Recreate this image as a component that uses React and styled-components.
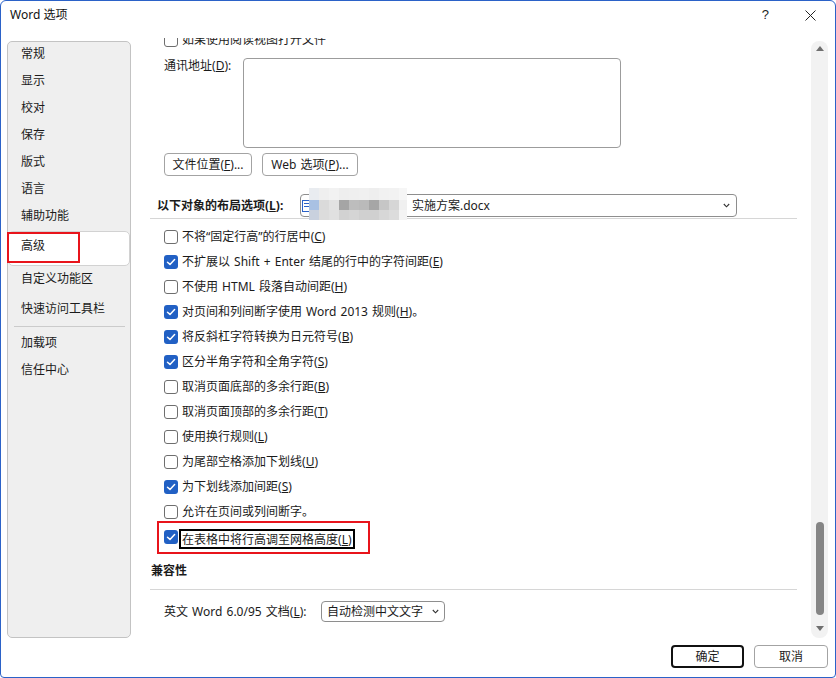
import React from 'react'
import styled, { createGlobalStyle } from 'styled-components'

const GlobalStyle = createGlobalStyle`
  html, body {
    margin: 0;
    padding: 0;
    width: 836px;
    height: 678px;
    overflow: hidden;
    background: #fff;
  }
  body {
    font-family: "Noto Sans", "Noto Sans CJK SC", "Microsoft YaHei", sans-serif;
    font-size: 12px;
    color: #1b1b1b;
  }
`

const Window = styled.div`
  box-sizing: border-box;
  width: 836px;
  height: 678px;
  border: 1px solid #2b62c8;
  border-radius: 6px 6px 4px 4px;
  background: #fff;
  display: flex;
  flex-direction: column;
  overflow: hidden;
`

const TitleBar = styled.div`
  box-sizing: border-box;
  height: 37px;
  flex-shrink: 0;
  display: flex;
  align-items: flex-start;
  padding: 6px 19px 0 9px;
  line-height: 16px;
  color: #111;
`

const TitleButtons = styled.div`
  margin-left: auto;
  display: flex;
  align-items: center;
  gap: 36px;
  height: 16px;
`

const HelpMark = styled.span`
  font-family: "Liberation Sans", sans-serif;
  font-size: 13px;
  color: #222;
`

const Body = styled.div`
  flex: 1;
  display: flex;
  min-height: 0;
`

const Nav = styled.div`
  box-sizing: border-box;
  width: 124px;
  height: 597px;
  margin: 3px 0 0 6px;
  border: 1px solid #c3c3c3;
  border-radius: 5px;
  background: #efefef;
  display: flex;
  flex-direction: column;
  flex-shrink: 0;
`

const NavItem = styled.div`
  position: relative;
  box-sizing: border-box;
  height: ${p => p.$h || 27}px;
  padding: ${p => p.$pt || 0}px 0 ${p => p.$pb ?? 4}px 12px;
  display: flex;
  align-items: center;
  line-height: 16px;
  color: #1b1b1b;
  background: ${p => (p.$selected ? '#fff' : 'transparent')};
  border: ${p => (p.$selected ? '1px solid #d2d2d2' : '1px solid transparent')};
  border-radius: 5px;
`

const NavDivider = styled.div`
  height: 1px;
  margin: 0 5px 0 6px;
  background: #cbcbcb;
`

const RedMark = styled.div`
  position: absolute;
  left: -2px;
  top: 0;
  width: 73px;
  height: 31px;
  box-sizing: border-box;
  border: 2px solid #e8141b;
`

const Content = styled.div`
  flex: 1;
  min-width: 0;
  margin-left: 9px;
  padding: 0 14px 0 10px;
  overflow: hidden;
  display: flex;
  flex-direction: column;
  word-spacing: 1px;
`

const PartialRow = styled.div`
  flex-shrink: 0;
  height: 25px;
  margin-top: -11px;
  padding-left: 14px;
  display: flex;
  align-items: center;
  gap: 4px;
  line-height: 16px;
`

const AddressRow = styled.div`
  flex-shrink: 0;
  display: flex;
  align-items: flex-start;
  margin-top: 6px;
  padding-left: 14px;
`

const FieldLabel = styled.span`
  width: ${p => p.$w}px;
  flex-shrink: 0;
  line-height: 16px;
  white-space: nowrap;
`

const TextBox = styled.div`
  box-sizing: border-box;
  width: 378px;
  height: 90px;
  border: 1px solid #9c9c9c;
  border-radius: 4px;
  background: #fff;
`

const ButtonRow = styled.div`
  flex-shrink: 0;
  display: flex;
  gap: 10px;
  margin-top: 5px;
  padding-left: 14px;
`

const Button = styled.button`
  box-sizing: border-box;
  width: ${p => p.$w}px;
  height: 23px;
  padding: 0;
  font-family: inherit;
  font-size: 12px;
  word-spacing: 1px;
  color: #1b1b1b;
  background: #fff;
  border: ${p => (p.$primary ? '2px solid #111' : '1px solid #a3a3a3')};
  border-radius: 4px;
  line-height: 16px;
  white-space: nowrap;
`

const LayoutRow = styled.div`
  flex-shrink: 0;
  display: flex;
  align-items: center;
  height: 23px;
  margin-top: 18px;
  padding-left: 7px;
`

const BoldLabel = styled.span`
  font-weight: bold;
  line-height: 16px;
  width: ${p => (p.$w ? `${p.$w}px` : 'auto')};
  flex-shrink: 0;
  white-space: nowrap;
  padding-left: ${p => p.$pl || 0}px;
  margin-top: ${p => p.$mt || 0}px;
`

const Select = styled.div`
  position: relative;
  box-sizing: border-box;
  width: ${p => p.$w}px;
  height: ${p => p.$h}px;
  border: 1px solid #8e8e8e;
  border-radius: 4px;
  background: #fff;
  display: flex;
  align-items: center;
  padding-left: ${p => p.$pl || 0}px;
  line-height: 16px;
  flex-shrink: 0;
  white-space: nowrap;
`

const Redacted = styled.span`
  width: 101px;
  flex-shrink: 0;
`

const Chevron = styled.svg`
  margin-left: auto;
  margin-right: ${p => p.$mr || 6}px;
  flex-shrink: 0;
`

const Mosaic = styled.svg`
  position: absolute;
  left: 8px;
  top: -7px;
`

const Divider = styled.div`
  flex-shrink: 0;
  height: 1px;
  margin-top: ${p => p.$mt}px;
  background: #d6d6d6;
`

const CheckList = styled.div`
  flex-shrink: 0;
  display: flex;
  flex-direction: column;
  margin-top: 5px;
`

const CheckRow = styled.div`
  position: relative;
  height: 25px;
  padding-left: 14px;
  display: flex;
  align-items: center;
  gap: 4px;
  line-height: 16px;
  white-space: nowrap;
`

const Box = styled.span`
  box-sizing: border-box;
  width: 14px;
  height: 14px;
  flex-shrink: 0;
  border-radius: 3px;
  border: ${p => (p.$checked ? 'none' : '1px solid #6e6e6e')};
  background: ${p => (p.$checked ? '#2160c4' : '#fff')};
  display: flex;
  align-items: center;
  justify-content: center;
`

const FocusLabel = styled.span`
  margin-left: -3px;
  padding: 1px 1px 0;
  border: 2px solid #000;
  line-height: 15px;
  position: relative;
  top: 2px;
`

const RowMark = styled.div`
  position: absolute;
  left: 7px;
  top: -3px;
  width: 213px;
  height: 33px;
  box-sizing: border-box;
  border: 2px solid #e8141b;
  pointer-events: none;
`

const CompatRow = styled.div`
  flex-shrink: 0;
  display: flex;
  align-items: center;
  height: 21px;
  margin-top: 11px;
  padding-left: 14px;
`

const Scrollbar = styled.div`
  width: 17px;
  height: 597px;
  margin: 3px 7px 0 0;
  border-radius: 8px;
  background: #f2f2f2;
  display: flex;
  flex-direction: column;
  align-items: center;
  flex-shrink: 0;
`

const ArrowSlot = styled.div`
  box-sizing: border-box;
  height: ${p => p.$h}px;
  padding-top: ${p => p.$pt}px;
  display: flex;
  justify-content: center;
`

const Thumb = styled.div`
  width: 8px;
  height: 93px;
  border-radius: 4px;
  background: #858585;
  margin-top: auto;
`

const Footer = styled.div`
  box-sizing: border-box;
  height: 38px;
  flex-shrink: 0;
  display: flex;
  justify-content: flex-end;
  gap: 10px;
  padding: 6px 7px 0 0;
`

const U = styled.span`
  text-decoration: underline;
  text-underline-offset: 1px;
`

const Key = ({ k }) => (
  <>
    (<U>{k}</U>)
  </>
)

const Check = ({ checked }) => (
  <Box $checked={checked}>
    {checked && (
      <svg width="10" height="8" viewBox="0 0 10 8">
        <polyline points="1.5,4.2 4,6.4 8.6,1.6" fill="none" stroke="#fff" strokeWidth="1.5" strokeLinecap="round" strokeLinejoin="round" />
      </svg>
    )}
  </Box>
)

const ChevronDown = ({ mr }) => (
  <Chevron $mr={mr} width="7" height="5" viewBox="0 0 7 5">
    <polyline points="0.8,1 3.5,3.8 6.2,1" fill="none" stroke="#333" strokeWidth="1.1" />
  </Chevron>
)

const mosaicRows = [
  { h: 12, c: ['#e9ecf0', '#efefef', '#f2f2f2', '#eeeeee', '#efefef', '#f0f0f0', '#eeeeee', '#f1f1f1', '#f2f2f2', '#f6f6f6'] },
  { h: 10, c: ['#a9c1e3', '#dadada', '#e2e2e2', '#a5a5a5', '#bdbdbd', '#bababa', '#a6a6a6', '#c6c6c6', '#d6d6d6', '#f0f0f0'] },
  { h: 10, c: ['#c9d1de', '#dcdcdc', '#e0e0e0', '#d2d2d2', '#d5d5d5', '#d0d0d0', '#d0d0d0', '#d7d7d7', '#dcdcdc', '#f4f4f4'] },
]

const MosaicPicture = () => {
  let y = 0
  return (
    <Mosaic width="98" height="32" viewBox="0 0 98 32">
      {mosaicRows.map((row, r) => {
        const top = y
        y += row.h
        return row.c.map((c, i) => (
          <rect key={`${r}-${i}`} x={i * 10} y={top} width={i === 9 ? 8 : 10} height={row.h} fill={c} />
        ))
      })}
    </Mosaic>
  )
}

const navTop = ['常规', '显示', '校对', '保存', '版式', '语言', '辅助功能']

const options = [
  { label: '不将“固定行高”的行居中', k: 'C' },
  { label: '不扩展以 Shift + Enter 结尾的行中的字符间距', k: 'E', checked: true },
  { label: '不使用 HTML 段落自动间距', k: 'H' },
  { label: '对页间和列间断字使用 Word 2013 规则', k: 'H', checked: true, tail: '。' },
  { label: '将反斜杠字符转换为日元符号', k: 'B', checked: true },
  { label: '区分半角字符和全角字符', k: 'S', checked: true },
  { label: '取消页面底部的多余行距', k: 'B' },
  { label: '取消页面顶部的多余行距', k: 'T' },
  { label: '使用换行规则', k: 'L' },
  { label: '为尾部空格添加下划线', k: 'U' },
  { label: '为下划线添加间距', k: 'S', checked: true },
  { label: '允许在页间或列间断字。' },
  { label: '在表格中将行高调至网格高度', k: 'L', checked: true, marked: true },
]

export default function App() {
  return (
    <>
      <GlobalStyle />
      <Window>
        <TitleBar>
          <span>Word 选项</span>
          <TitleButtons>
            <HelpMark>?</HelpMark>
            <svg width="11" height="11" viewBox="0 0 11 11">
              <path d="M0.5 0.5 L10.5 10.5 M10.5 0.5 L0.5 10.5" stroke="#222" strokeWidth="1" />
            </svg>
          </TitleButtons>
        </TitleBar>

        <Body>
          <Nav>
            {navTop.map(t => (
              <NavItem key={t}>{t}</NavItem>
            ))}
            <NavItem $selected $h={35} $pb={6}>
              高级
              <RedMark />
            </NavItem>
            <NavItem $h={30}>自定义功能区</NavItem>
            <NavItem $h={30}>快速访问工具栏</NavItem>
            <NavDivider />
            <NavItem $pt={5} $pb={0}>加载项</NavItem>
            <NavItem $pt={5} $pb={0}>信任中心</NavItem>
          </Nav>

          <Content>
            <PartialRow>
              <Check />
              <span>如果使用阅读视图打开文件</span>
            </PartialRow>

            <AddressRow>
              <FieldLabel $w={79}>
                通讯地址<Key k="D" />:
              </FieldLabel>
              <TextBox />
            </AddressRow>

            <ButtonRow>
              <Button $w={88}>
                文件位置<Key k="F" />...
              </Button>
              <Button $w={96}>
                Web 选项<Key k="P" />...
              </Button>
            </ButtonRow>

            <LayoutRow>
              <BoldLabel $w={143}>
                以下对象的布局选项<Key k="L" />:
              </BoldLabel>
              <Select $w={437} $h={23} $pl={1}>
                <svg width="9" height="12" viewBox="0 0 9 12">
                  <rect x="0.5" y="0.5" width="8" height="11" fill="#fff" stroke="#2b62c8" />
                  <rect x="2" y="3" width="5" height="1" fill="#2b62c8" />
                  <rect x="2" y="6" width="5" height="1" fill="#2b62c8" />
                </svg>
                <Redacted />
                <span>实施方案.docx</span>
                <ChevronDown mr={6} />
                <MosaicPicture />
              </Select>
            </LayoutRow>

            <Divider $mt={1} />

            <CheckList>
              {options.map((o, i) => (
                <CheckRow key={i}>
                  <Check checked={o.checked} />
                  {o.marked ? (
                    <FocusLabel>
                      {o.label}
                      <Key k={o.k} />
                    </FocusLabel>
                  ) : (
                    <span>
                      {o.label}
                      {o.k && <Key k={o.k} />}
                      {o.tail}
                    </span>
                  )}
                  {o.marked && <RowMark />}
                </CheckRow>
              ))}
            </CheckList>

            <BoldLabel as="div" $pl={1} $mt={14}>
              兼容性
            </BoldLabel>

            <Divider $mt={10} />

            <CompatRow>
              <FieldLabel $w={157}>
                英文 Word 6.0/95 文档<Key k="L" />:
              </FieldLabel>
              <Select $w={124} $h={21} $pl={5}>
                <span>自动检测中文文字</span>
                <ChevronDown mr={5} />
              </Select>
            </CompatRow>
          </Content>

          <Scrollbar>
            <ArrowSlot $h={15} $pt={5}>
              <svg width="8" height="5" viewBox="0 0 8 5">
                <polygon points="0,5 4,0 8,5" fill="#6f6f6f" />
              </svg>
            </ArrowSlot>
            <Thumb />
            <ArrowSlot $h={23} $pt={11}>
              <svg width="8" height="5" viewBox="0 0 8 5">
                <polygon points="0,0 8,0 4,5" fill="#6f6f6f" />
              </svg>
            </ArrowSlot>
          </Scrollbar>
        </Body>

        <Footer>
          <Button $w={73} $primary>
            确定
          </Button>
          <Button $w={74}>取消</Button>
        </Footer>
      </Window>
    </>
  )
}
